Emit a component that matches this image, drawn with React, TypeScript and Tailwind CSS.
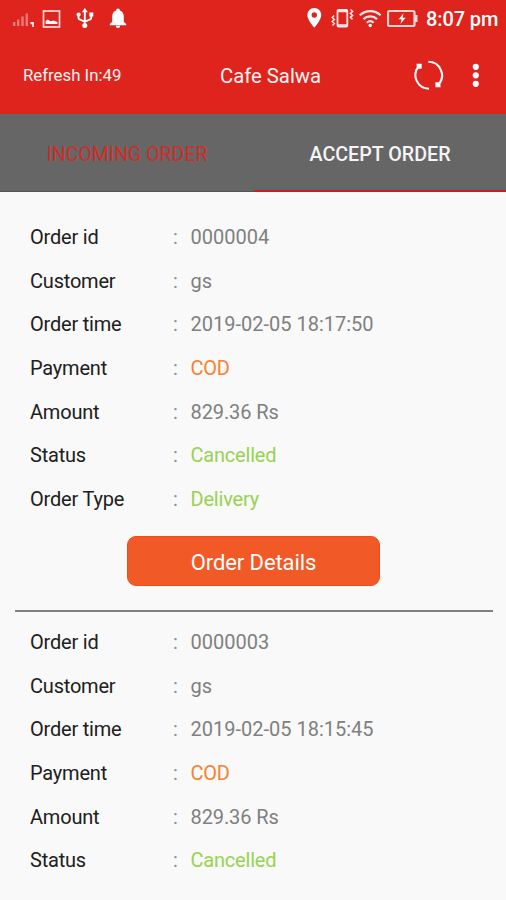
type Order = { id: string; customer: string; time: string; amount: string };

const orders: Order[] = [
  { id: '0000004', customer: 'gs', time: '2019-02-05 18:17:50', amount: '829.36 Rs' },
  { id: '0000003', customer: 'gs', time: '2019-02-05 18:15:45', amount: '829.36 Rs' },
];

function StatusBar() {
  return (
    <div className="flex h-[38px] items-center justify-between pl-[12px] pr-[8px] text-white">
      <div className="flex items-center">
        <svg width="23" height="18" viewBox="0 0 23 18" fill="#fff">
          <g fillOpacity=".4">
            <rect x="1" y="12" width="2.4" height="4" />
            <rect x="5" y="9.5" width="2.4" height="6.5" />
            <rect x="9.3" y="6.5" width="2.4" height="9.5" />
            <rect x="13.6" y="3.5" width="2.4" height="12.5" />
          </g>
          <path d="M18.5 12h3.3v5h-1.5v-2.800h-1.800z" />
        </svg>
        <svg className="ml-[7px]" width="19" height="19" viewBox="0 0 19 19">
          <rect x="1.5" y="1" width="16" height="16" fill="none" stroke="#fff" strokeOpacity=".85" strokeWidth="1.7" />
          <path d="M3.6 14v-3l2.200-1.600 2.600 1.800 3.200-.6 3.800 1.400v2z" fill="#fff" />
        </svg>
        <svg className="ml-[15px]" width="18" height="22" viewBox="0 0 18 22" fill="none" stroke="#fff" strokeWidth="1.9">
          <path d="M8.800 3v15M2.500 7v3q0 1.100 1.200 1.500l5.100 2.300 5.200-2.300q1.200-.4 1.200-1.500V7" />
          <g fill="#fff" stroke="none">
            <path d="M8.800 0l3 4.200h-6z" />
            <circle cx="8.8" cy="17.5" r="2.5" />
            <circle cx="2.6" cy="6.5" r="2.1" />
            <rect x="13.3" y="4.5" width="4" height="4" />
          </g>
        </svg>
        <svg className="ml-[15px]" width="18" height="22" viewBox="0 0 18 22" fill="#fff">
          <path d="M9 .5c1.200 0 1.800.8 1.800 2.100 2.700.8 4 3.100 4 5.900v5.200l2.400 2.300v1.200H.8V16l2.400-2.300V8.500c0-2.800 1.300-5.100 4-5.900C7.200 1.300 7.800.5 9 .5zM6.800 17.800h4.400a2.200 2.200 0 0 1-4.400 0z" />
        </svg>
      </div>
      <div className="flex items-center">
        <svg width="17" height="22" viewBox="0 0 17 22">
          <path fillRule="evenodd" fill="#fff" d="M9.300 0a7 7 0 0 1 7 7.100c0 4.800-7 12.700-7 12.700s-7-7.900-7-12.700A7 7 0 0 1 9.300 0zm0 4.300a2.700 2.700 0 1 0 0 5.400 2.700 2.700 0 0 0 0-5.400z" />
        </svg>
        <svg className="ml-[8px]" width="24" height="22" viewBox="0 0 24 22" fill="none" stroke="#fff" strokeOpacity=".9">
          <rect x="7.500" y="2" width="9.800" height="16.500" rx="1" strokeWidth="1.8" />
          <path strokeWidth="1.5" d="M7.500 3.500h10M7.500 17h10M4.200 7.500l-2 2 2.200 2-2.200 2 2.200 2-2 2M20.600 1.500l2 1.900-2.200 2 2.200 2-2.200 2 2 2" />
        </svg>
        <svg className="ml-[4px]" width="24" height="20" viewBox="0 0 24 20" fill="none" stroke="#fff" strokeOpacity=".9" strokeWidth="2.2">
          <path d="M1.800 6.200c6-5.500 15-5.500 20.800 0M5.400 10.100c4-3.700 9.700-3.700 13.600 0M8.800 13.700c2-1.800 4.800-1.800 6.800 0" />
          <circle cx="12.2" cy="16.500" r="1.7" fill="#fff" stroke="none" />
        </svg>
        <svg className="ml-[5px]" width="32" height="20" viewBox="0 0 32 20">
          <rect x="1" y="2" width="26.500" height="15" rx="1.5" fill="none" stroke="#fff" strokeOpacity=".8" strokeWidth="2.2" />
          <rect x="28" y="6" width="2.5" height="7" fill="#fff" fillOpacity=".8" />
          <path d="M16.500 4.200l-4.800 6h3l-1.300 4.800 5.200-6.300h-3z" fill="#fff" />
        </svg>
        <span className="ml-[7px] w-[72px] whitespace-nowrap text-[20px] font-medium leading-[38px] tracking-[-0.1px]">8:07 pm</span>
      </div>
    </div>
  );
}

function Header() {
  return (
    <header className="h-[114px] bg-[#df231d] text-[#fff4f2]">
      <StatusBar />
      <div className="flex h-[76px] items-center pl-[23px]">
        <span className="w-[197px] text-[16.8px]">Refresh In:49</span>
        <h1 className="w-[193px] text-[20.3px] font-normal">Cafe Salwa</h1>
        <svg width="32" height="32" viewBox="0 0 32 32" fill="none" stroke="#fff" strokeWidth="2.1">
          <path d="M16 28.700A13.600 13.600 0 0 1 5.500 6.500M15.300 1.800A13.600 13.600 0 0 1 25.500 24.500" />
          <path d="M3.500 3.800h5.200v4.900H3.900zM27.600 27.200h-5.200v-4.900h4.800z" fill="#fff" stroke="none" />
        </svg>
        <svg className="ml-[27px]" width="8" height="26" viewBox="0 0 8 26" fill="#fff">
          <circle cx="3.8" cy="3.8" r="3.1" />
          <circle cx="3.8" cy="12.3" r="3.1" />
          <circle cx="3.8" cy="20.8" r="3.1" />
        </svg>
      </div>
    </header>
  );
}

function Row({ label, value, tone = 'text-[#808080]' }: { label: string; value: string; tone?: string }) {
  return (
    <div className="flex h-[43.6px] items-center text-[20px]">
      <dt className="w-[143px] tracking-[-0.2px] text-[#202020]">{label}</dt>
      <span className="w-[17.5px] text-[#909090]">:</span>
      <dd className={tone}>{value}</dd>
    </div>
  );
}

function OrderCard({ order, expanded }: { order: Order; expanded: boolean }) {
  return (
    <section className="ml-[15px] mr-[13px]">
      <dl className="pl-[15px]">
        <Row label="Order id" value={order.id} />
        <Row label="Customer" value={order.customer} />
        <Row label="Order time" value={order.time} />
        <Row label="Payment" value="COD" tone="tracking-[-0.3px] text-[#f58232]" />
        <Row label="Amount" value={order.amount} tone="tracking-[-0.1px] text-[#808080]" />
        <Row label="Status" value="Cancelled" tone="tracking-[-0.2px] text-[#98d252]" />
        {expanded && <Row label="Order Type" value="Delivery" tone="tracking-[-0.2px] text-[#98d252]" />}
      </dl>
      {expanded && (
        <>
          <button className="ml-[112px] mt-[15.6px] block h-[50px] w-[253px] rounded-[9px] border border-[#ee4d1b] bg-[#f15a27] pt-[2px] text-[22px] tracking-[-0.1px] text-white">
            Order Details
          </button>
          <hr className="mb-[8.2px] mt-[24px] h-[2px] border-0 bg-[#808080]" />
        </>
      )}
    </section>
  );
}

export default function App() {
  return (
    <div className="h-[900px] w-[506px] overflow-hidden bg-[#f9f9f9] font-['Roboto',sans-serif]">
      <Header />
      <nav className="flex h-[78px] bg-[#666]">
        <button className="w-[254px] border-b border-[#555] pt-[5px] text-[19.5px] text-[#cf2d27]">INCOMING ORDER</button>
        <button className="w-[252px] border-b-2 border-[#c2211e] pt-[6px] text-[19.7px] font-medium text-[#f5f5f5]">ACCEPT ORDER</button>
      </nav>
      <main className="pt-[23.4px]">
        {orders.map((order, index) => (
          <OrderCard key={order.id} order={order} expanded={index === 0} />
        ))}
      </main>
    </div>
  );
}
